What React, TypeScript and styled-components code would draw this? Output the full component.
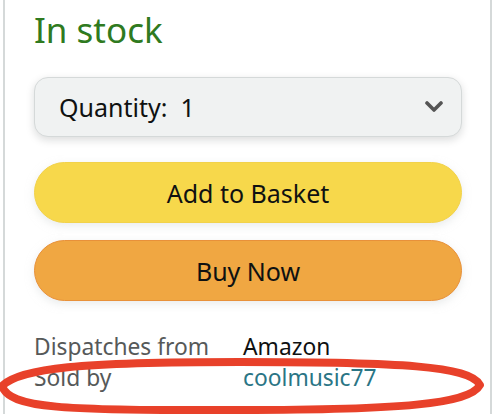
import React from "react";
import styled, { createGlobalStyle } from "styled-components";

const Global = createGlobalStyle`
  html, body { margin: 0; padding: 0; background: #ffffff; }
  body { font-family: "Noto Sans", "Liberation Sans", Arial, sans-serif; overflow: hidden; }
`;

const Page = styled.div`
  position: relative;
  width: 496px;
  height: 414px;
  overflow: hidden;
`;

const Card = styled.div`
  margin-left: 3px;
  width: 489px;
  min-height: 414px;
  border-left: 2px solid #d5d9d9;
  border-right: 2px solid #d5d9d9;
  padding: 8px 28px 0 29px;
  box-sizing: border-box;
  display: flex;
  flex-direction: column;
  & > * { flex-shrink: 0; }
`;

const Stock = styled.div`
  color: #2f7a20;
  font-size: 35px;
  line-height: 44px;
  font-weight: 400;
`;

const Select = styled.div`
  margin-top: 25px;
  height: 60px;
  box-sizing: border-box;
  border: 1px solid #d5d9d9;
  border-radius: 14px;
  background: #f0f2f2;
  box-shadow: 0 3px 8px rgba(15, 17, 17, 0.15);
  display: flex;
  align-items: center;
  justify-content: space-between;
  padding: 0 18px 0 24px;
  font-size: 25px;
  color: #0f1111;
`;

const Button = styled.div<{ $bg: string; $border: string }>`
  height: 61px;
  border-radius: 31px;
  background: ${(p) => p.$bg};
  border: 1px solid ${(p) => p.$border};
  box-sizing: border-box;
  box-shadow: 0 3px 8px rgba(213, 217, 217, 0.5);
  display: flex;
  align-items: center;
  justify-content: center;
  font-size: 25px;
  color: #0f1111;
`;

const Buttons = styled.div`
  margin-top: 25px;
  display: flex;
  flex-direction: column;
  gap: 17px;
`;

const Details = styled.div`
  margin-top: 30px;
  display: grid;
  grid-template-columns: 209px 1fr;
  font-size: 22.8px;
  line-height: 31px;
`;

const Label = styled.div<{ $spaced?: boolean }>`
  color: #565959;
  margin-top: ${(p) => (p.$spaced ? "15px" : "0")};
`;

const Value = styled.div<{ $link?: boolean; $spaced?: boolean }>`
  color: ${(p) => (p.$link ? "#2a7585" : "#0f1111")};
  white-space: nowrap;
  margin-top: ${(p) => (p.$spaced ? "15px" : "0")};
`;

const Circle = styled.svg`
  position: absolute;
  left: 0;
  top: 350px;
  pointer-events: none;
`;

export default function App() {
  return (
    <>
      <Global />
      <Page>
        <Card>
          <Stock>In stock</Stock>
          <Select>
            <span>Quantity:&nbsp; 1</span>
            <svg width="18" height="12" viewBox="0 0 18 12">
              <path d="M2 2 L9 9 L16 2" fill="none" stroke="#555" strokeWidth="3.6" strokeLinecap="round" strokeLinejoin="round" />
            </svg>
          </Select>
          <Buttons>
            <Button $bg="#f7d84b" $border="#f2d24a">Add to Basket</Button>
            <Button $bg="#f0a742" $border="#e8913a">Buy Now</Button>
          </Buttons>
          <Details>
            <Label>Dispatches from</Label>
            <Value>Amazon</Value>
            <Label>Sold by</Label>
            <Value $link>coolmusic77</Value>
            <Label $spaced>Returns</Label>
            <Value $link $spaced>Returnable within 30 days</Value>
          </Details>
        </Card>
        <Circle width="496" height="70" viewBox="0 350 496 70">
          <path
            d="M2 386 C 20 368, 80 362, 240 362 C 400 362, 470 366, 480 385 C 470 404, 400 410, 240 410 C 60 411, 10 408, 2 386 Z"
            fill="none"
            stroke="#e8412a"
            strokeWidth="8"
            strokeLinejoin="round"
          />
        </Circle>
      </Page>
    </>
  );
}
